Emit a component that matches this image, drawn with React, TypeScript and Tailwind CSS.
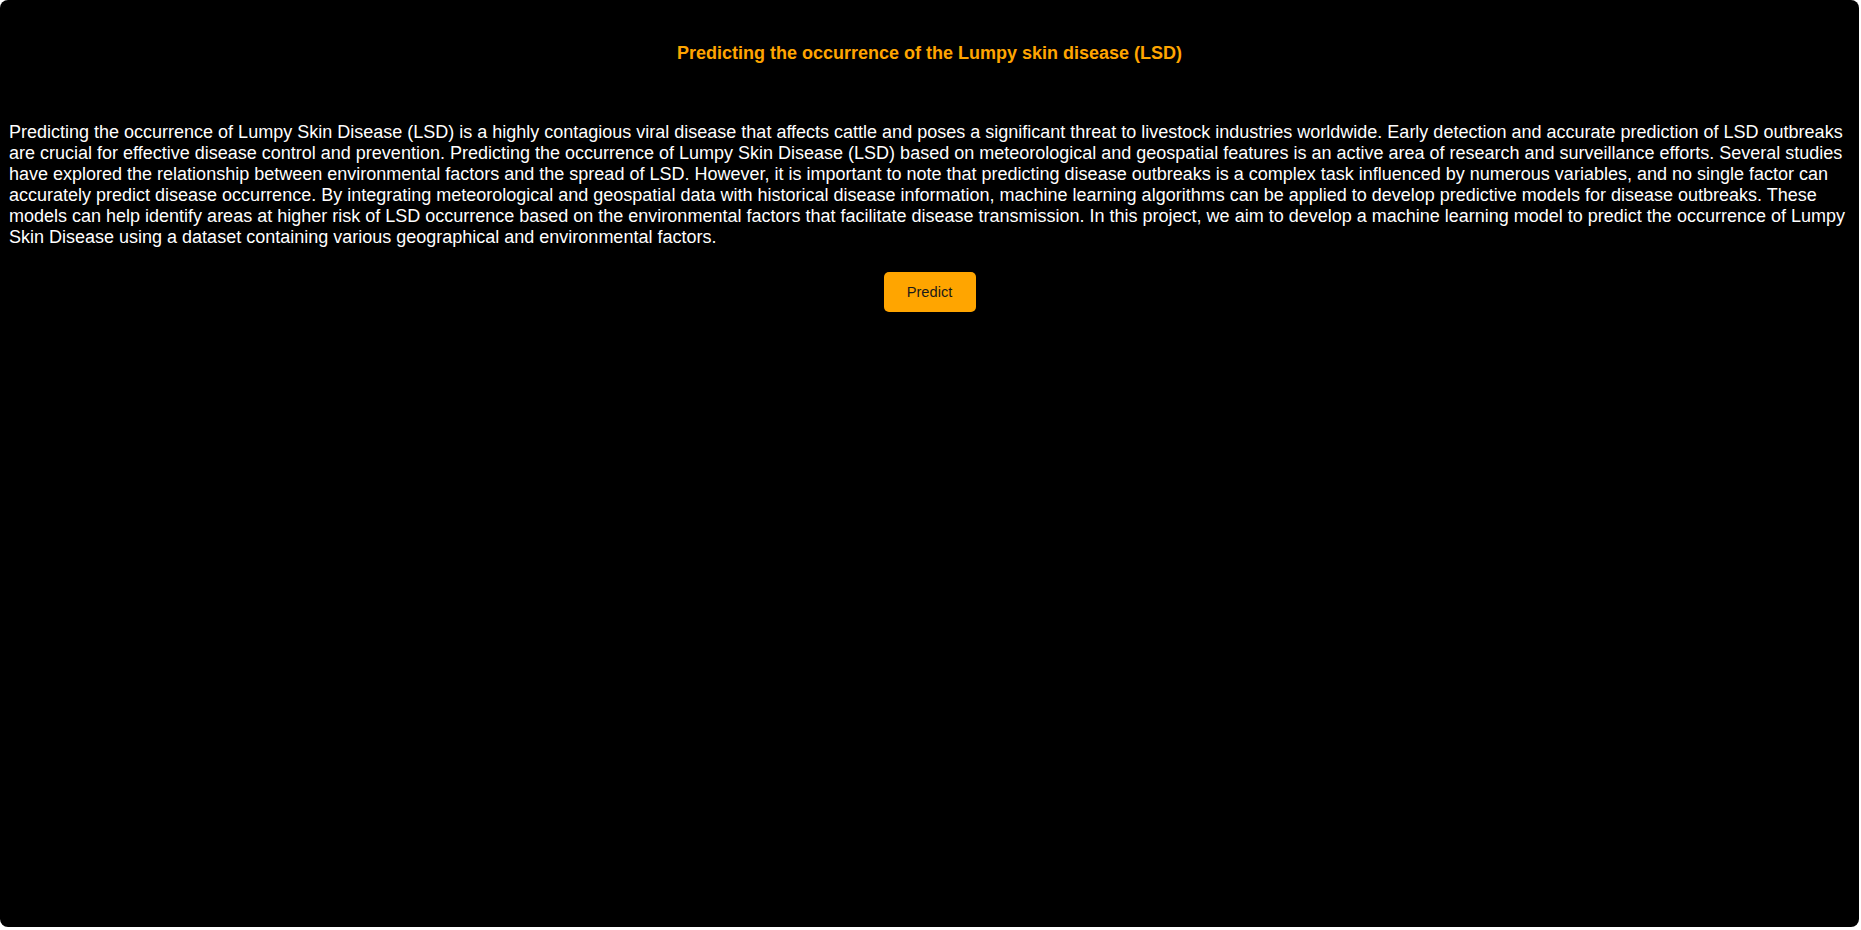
import React from "react";

const description =
    "Predicting the occurrence of Lumpy Skin Disease (LSD) is a highly contagious viral disease that affects cattle and poses a significant threat to livestock industries worldwide. Early detection and accurate prediction of LSD outbreaks are crucial for effective disease control and prevention. Predicting the occurrence of Lumpy Skin Disease (LSD) based on meteorological and geospatial features is an active area of research and surveillance efforts. Several studies have explored the relationship between environmental factors and the spread of LSD. However, it is important to note that predicting disease outbreaks is a complex task influenced by numerous variables, and no single factor can accurately predict disease occurrence. By integrating meteorological and geospatial data with historical disease information, machine learning algorithms can be applied to develop predictive models for disease outbreaks. These models can help identify areas at higher risk of LSD occurrence based on the environmental factors that facilitate disease transmission. In this project, we aim to develop a machine learning model to predict the occurrence of Lumpy Skin Disease using a dataset containing various geographical and environmental factors.";

const App: React.FC = () => {
    return (
        <div className="w-full min-h-screen bg-white font-['Liberation_Sans',Arial,sans-serif] leading-[normal]">
            <div className="w-[1859px] h-[927px] bg-black rounded-[8px] px-[9px] pt-[43px] flex flex-col">
                <h1 className="text-center text-[18px] leading-[normal] font-bold text-[#ffa500]">
                    Predicting the occurrence of the Lumpy skin disease (LSD)
                </h1>
                <p className="mt-[58px] text-[18px] leading-[normal] text-white">{description}</p>
                <div className="flex justify-center mt-[24px]">
                    <button
                        type="button"
                        className="w-[92px] h-[40px] rounded-[5px] bg-[#ffa500] text-[14.67px] leading-[normal] text-[#1a1a1a]"
                    >
                        Predict
                    </button>
                </div>
            </div>
        </div>
    );
};

export default App;
